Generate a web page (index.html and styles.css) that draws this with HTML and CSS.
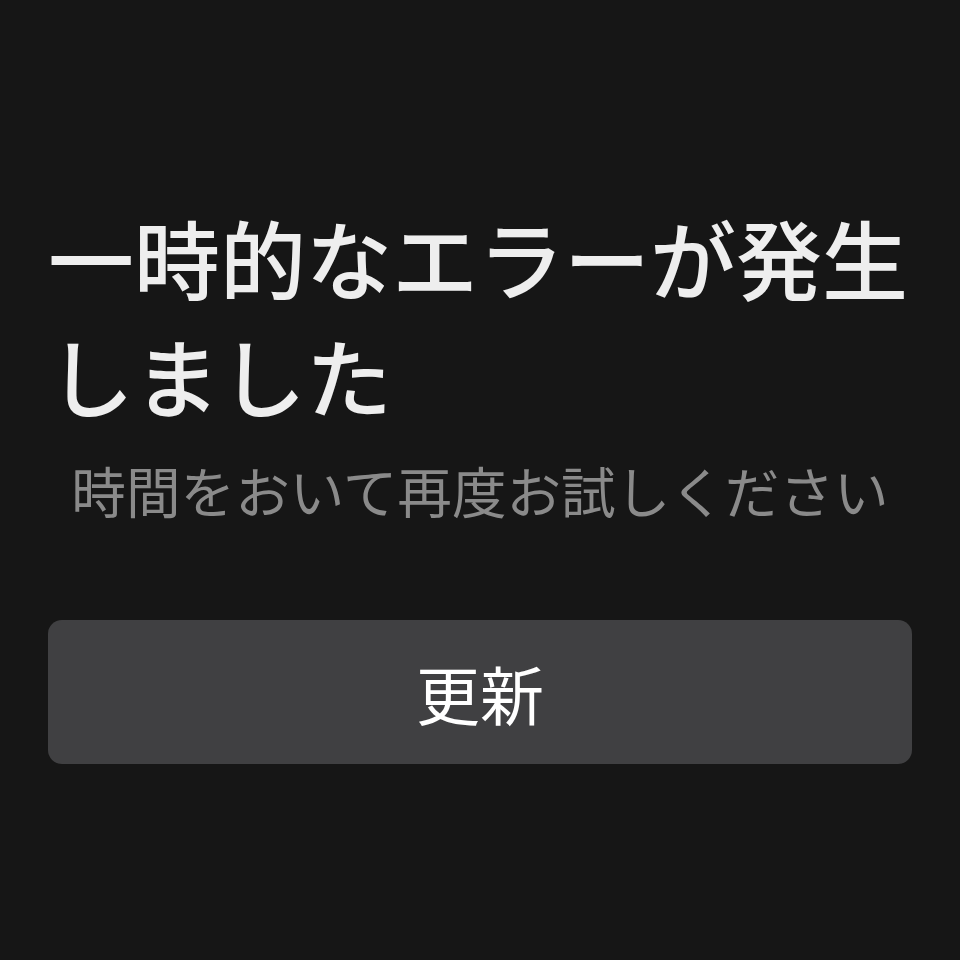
FILE: index.html
```html
<!DOCTYPE html>
<html lang="ja">
<head>
    <meta charset="UTF-8">
    <meta name="viewport" content="width=device-width, initial-scale=1.0">
    <title>エラー</title>
    <link rel="stylesheet" href="styles.css">
</head>
<body>
    <div class="error-page">
        <h1 class="error-title">一時的なエラーが発生しました</h1>
        <p class="error-text">時間をおいて再度お試しください</p>
        <button class="reload-btn" type="button">更新</button>
    </div>
</body>
</html>
```

FILE: styles.css
```css
* {
    margin: 0;
    padding: 0;
    box-sizing: border-box;
    font-family: "Noto Sans CJK JP", "Noto Sans", sans-serif;
}

html, body {
    background: #161616;
    min-height: 100vh;
}

.error-page {
    display: flex;
    flex-direction: column;
    padding: 198px 48px 0;
}

.error-title {
    font-size: 86px;
    font-weight: 500;
    line-height: 118px;
    color: #eeeeee;
    text-align: left;
}

.error-text {
    margin-top: 21px;
    font-size: 54.6px;
    font-weight: 400;
    line-height: 70px;
    color: #8a8a8a;
    text-align: center;
}

.reload-btn {
    margin-top: 95px;
    height: 144px;
    width: 100%;
    background: #404042;
    color: #ffffff;
    border: none;
    border-radius: 14px;
    font-size: 64px;
    font-weight: 400;
    cursor: pointer;
}
```
